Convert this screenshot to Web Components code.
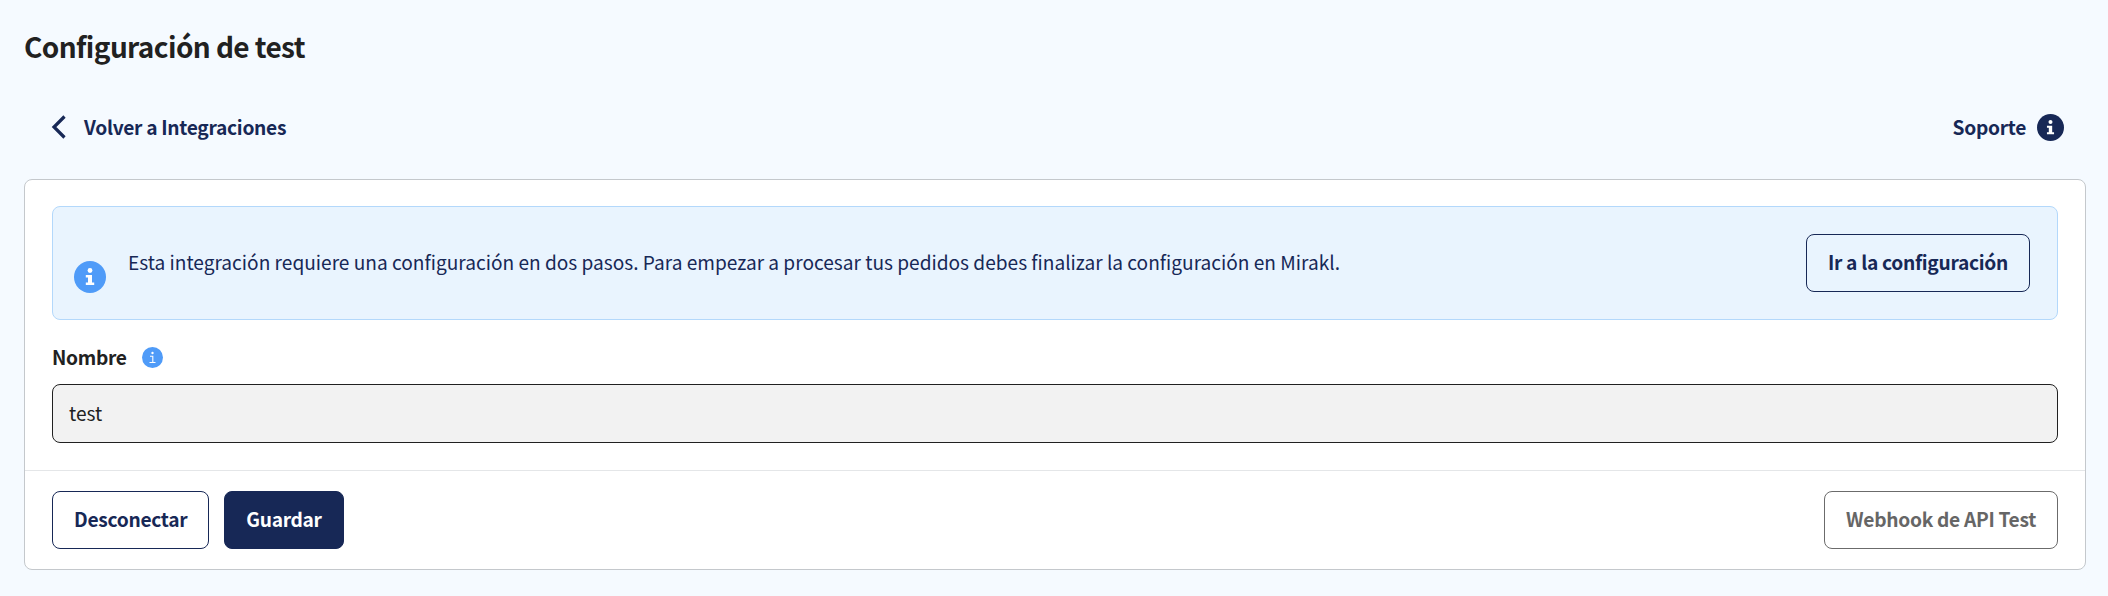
<!DOCTYPE html>
<html lang="es">
<head>
<meta charset="utf-8">
<title>Configuración de test</title>
<style>
    html, body { margin: 0; height: 100%; }
    body {
        background: #f5faff;
        font-family: "Noto Sans CJK SC", "Noto Sans", sans-serif;
        color: #212121;
    }
</style>
</head>
<body>
<template id="info-icon-tpl">
    <style>
        :host { display: inline-flex; }
        svg { display: block; width: var(--size, 32px); height: var(--size, 32px); }
    </style>
    <svg viewBox="0 0 32 32">
        <circle cx="16" cy="16" r="16" fill="currentColor"></circle>
        <circle cx="16" cy="9.5" r="2.4" fill="#fff"></circle>
        <path d="M11.8 14h6.2v7.6h2.2V24h-8.4v-2.4H14v-5.2h-2.2z" fill="#fff"></path>
    </svg>
</template>

<script>
    const sheet = `
        :host { display: inline-flex; }
        button {
            font: inherit;
            font-size: 19.2px;
            letter-spacing: -0.3px;
            font-weight: 700;
            height: 58px;
            padding: 0 21px 2px;
            border-radius: 8px;
            border: 1px solid #172856;
            background: transparent;
            color: #172856;
            white-space: nowrap;
        }
        :host([variant="primary"]) button { background: #172856; color: #fff; }
        :host([variant="muted"]) button { border-color: #6b6b6b; color: #666; background: #fff; }
    `;

    class UiButton extends HTMLElement {
        constructor() {
            super();
            this.attachShadow({ mode: 'open' });
            this.shadowRoot.innerHTML = `<style>${sheet}</style><button><slot></slot></button>`;
        }
    }

    class InfoIcon extends HTMLElement {
        constructor() {
            super();
            this.attachShadow({ mode: 'open' });
            this.shadowRoot.appendChild(document.getElementById('info-icon-tpl').content.cloneNode(true));
        }
    }

    class PageHeader extends HTMLElement {
        constructor() {
            super();
            this.attachShadow({ mode: 'open' });
            this.shadowRoot.innerHTML = `
                <style>
                    :host { display: block; padding: 27px 24px 0; }
                    h1 { margin: 0; font-size: 28px; letter-spacing: -0.6px; line-height: 38px; font-weight: 700; color: #212121; }
                    nav {
                        display: flex;
                        justify-content: space-between;
                        align-items: center;
                        height: 32px;
                        margin-top: 46px;
                        padding: 0 20px 0 26px;
                        color: #172856;
                        font-size: 19.2px;
                        letter-spacing: -0.3px;
                        font-weight: 700;
                    }
                    .back, .help { display: flex; align-items: center; }
                    .back svg { width: 16px; height: 24px; margin-right: 18px; }
                    .help info-icon { --size: 27px; margin-left: 11px; }
                </style>
                <h1><slot name="title"></slot></h1>
                <nav>
                    <div class="back">
                        <svg viewBox="0 0 16 24"><path d="M14.500 1.500 4 12l10.500 10.500" fill="none" stroke="currentColor" stroke-width="3.200"></path></svg>
                        <slot name="back"></slot>
                    </div>
                    <div class="help"><slot name="help"></slot><info-icon></info-icon></div>
                </nav>
            `;
        }
    }

    class NoticeBox extends HTMLElement {
        constructor() {
            super();
            this.attachShadow({ mode: 'open' });
            this.shadowRoot.innerHTML = `
                <style>
                    :host {
                        display: flex;
                        align-items: center;
                        height: 114px;
                        box-sizing: border-box;
                        padding: 0 27px 0 21px;
                        background: #e9f4fe;
                        border: 1px solid #b3d8fb;
                        border-radius: 8px;
                        color: #172856;
                        font-size: 19.1px;
                    }
                    info-icon { color: #4f9bf8; margin: 28px 22px 0 0; }
                    .text { flex: 1; margin-top: -2px; }
                </style>
                <info-icon></info-icon>
                <div class="text"><slot></slot></div>
                <slot name="action"></slot>
            `;
        }
    }

    class TextField extends HTMLElement {
        constructor() {
            super();
            this.attachShadow({ mode: 'open' });
            this.shadowRoot.innerHTML = `
                <style>
                    :host { display: block; margin-top: 25px; }
                    label { display: flex; align-items: center; height: 24px; font-size: 19.2px; letter-spacing: -0.3px; font-weight: 700; color: #212121; }
                    .tip { display: inline-flex; margin-left: 15px; }
                    .tip svg { display: block; width: 21px; height: 21px; }
                    .box {
                        display: flex;
                        align-items: center;
                        box-sizing: border-box;
                        height: 59px;
                        margin-top: 15px;
                        padding: 0 16px 2px;
                        background: #f2f2f2;
                        border: 1px solid #212121;
                        border-radius: 8px;
                        font-size: 19.1px;
                    }
                </style>
                <label><slot name="label"></slot>
                    <span class="tip">
                        <svg viewBox="0 0 21 21">
                            <circle cx="10.500" cy="10.500" r="10.500" fill="#4f9bf8"></circle>
                            <circle cx="10.500" cy="6" r="1.200" fill="#fff"></circle>
                            <path d="M8 9.300h2.800v6.200M7.500 15.500h6" fill="none" stroke="#fff" stroke-width="1.100"></path>
                        </svg>
                    </span>
                </label>
                <div class="box"><slot></slot></div>
            `;
        }
    }

    class SettingsCard extends HTMLElement {
        constructor() {
            super();
            this.attachShadow({ mode: 'open' });
            this.shadowRoot.innerHTML = `
                <style>
                    :host {
                        display: block;
                        box-sizing: border-box;
                        margin: 36px 22px 0 24px;
                        background: #fff;
                        border: 1px solid #c4c8cc;
                        border-radius: 8px;
                    }
                    .body { padding: 26px 27px 27px; border-bottom: 1px solid #e4e6e8; }
                    .foot { display: flex; gap: 15px; padding: 20px 27px; }
                    .spacer { flex: 1; }
                </style>
                <div class="body"><slot></slot></div>
                <div class="foot">
                    <slot name="actions"></slot>
                    <div class="spacer"></div>
                    <slot name="extra"></slot>
                </div>
            `;
        }
    }

    customElements.define('ui-button', UiButton);
    customElements.define('info-icon', InfoIcon);
    customElements.define('page-header', PageHeader);
    customElements.define('notice-box', NoticeBox);
    customElements.define('text-field', TextField);
    customElements.define('settings-card', SettingsCard);
</script>

<page-header>
    <span slot="title">Configuración de test</span>
    <span slot="back">Volver a Integraciones</span>
    <span slot="help">Soporte</span>
</page-header>
<settings-card>
    <notice-box>
        Esta integración requiere una configuración en dos pasos. Para empezar a procesar tus pedidos debes finalizar la configuración en Mirakl.
        <ui-button slot="action">Ir a la configuración</ui-button>
    </notice-box>
    <text-field>
        <span slot="label">Nombre</span>
        test
    </text-field>
    <ui-button slot="actions">Desconectar</ui-button>
    <ui-button slot="actions" variant="primary">Guardar</ui-button>
    <ui-button slot="extra" variant="muted">Webhook de API Test</ui-button>
</settings-card>
</body>
</html>
